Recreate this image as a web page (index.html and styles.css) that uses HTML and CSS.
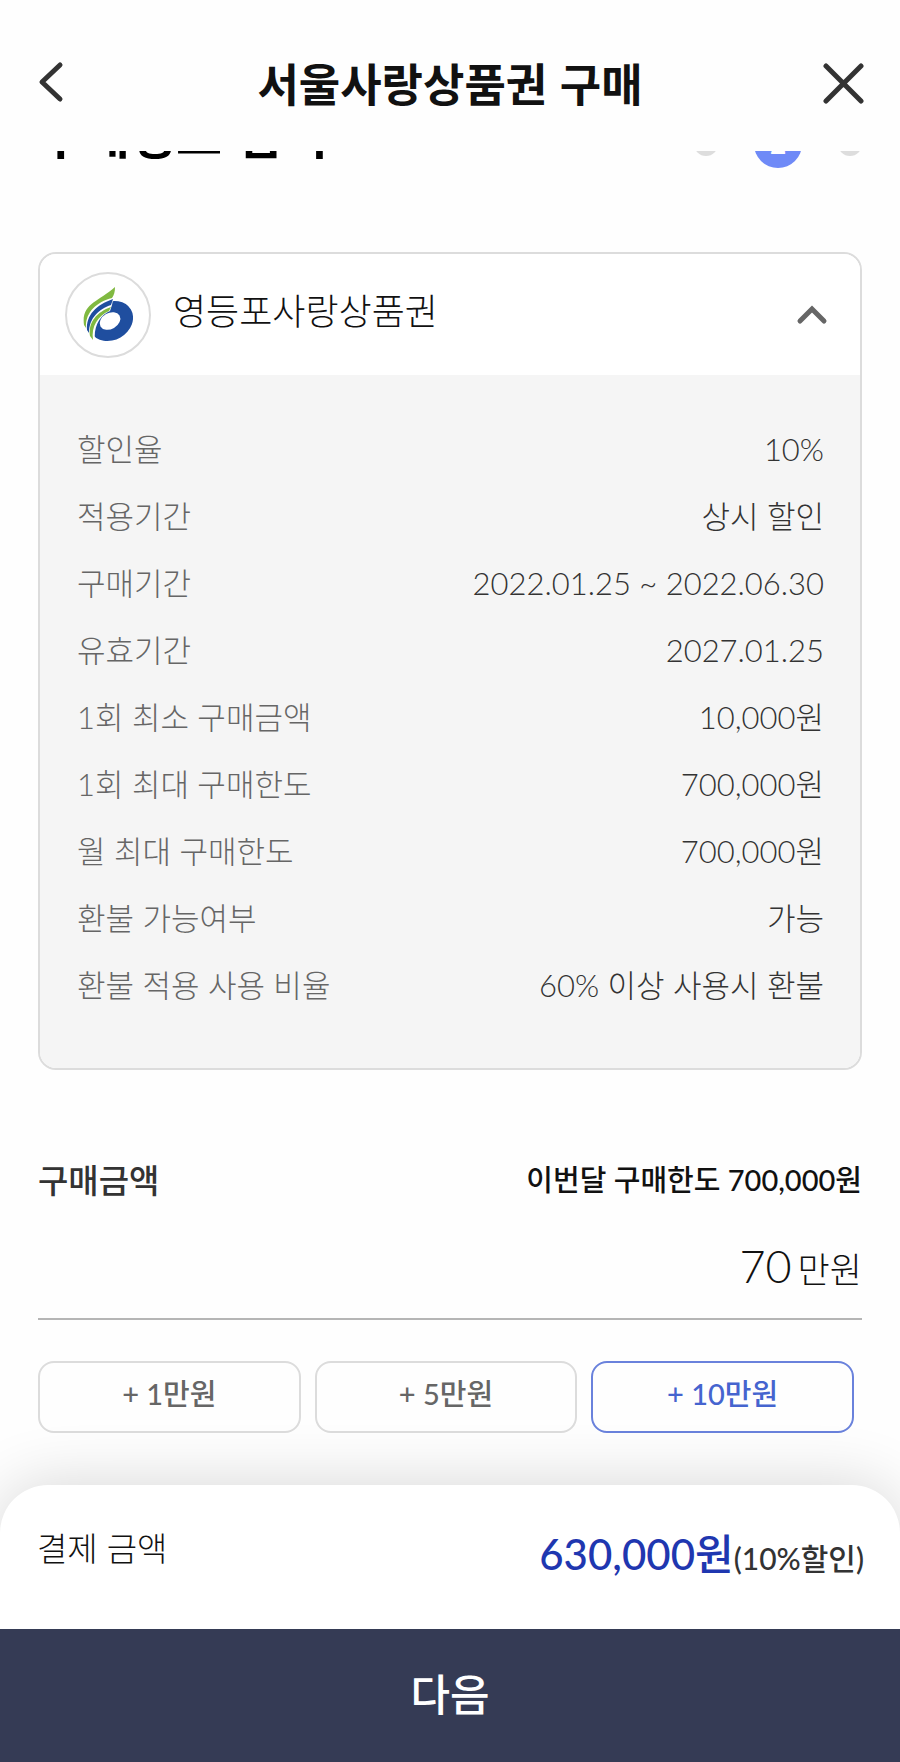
FILE: index.html
```html
<!DOCTYPE html>
<html lang="ko">
<head>
<meta charset="utf-8">
<meta name="viewport" content="width=device-width, initial-scale=1">
<title>서울사랑상품권 구매</title>
<link rel="stylesheet" href="styles.css">
</head>
<body>
<div class="app">
  <header class="topbar">
    <button class="icon-button" type="button" aria-label="뒤로">
      <svg width="44" height="44" viewBox="0 0 44 44"><path d="M24 4 L6 21 L24 38" /></svg>
    </button>
    <h1 class="topbar-title">서울사랑상품권 구매</h1>
    <button class="icon-button" type="button" aria-label="닫기">
      <svg width="44" height="44" viewBox="0 0 44 44"><path d="M6 5 L41 40 M41 5 L6 40" /></svg>
    </button>
  </header>

  <main class="content">
    <section class="step-strip">
      <h2 class="step-title">구매정보 입력</h2>
      <ol class="steps">
        <li class="step"></li>
        <li class="step step-current">2</li>
        <li class="step"></li>
      </ol>
    </section>

    <section class="voucher">
      <button class="voucher-head" type="button" aria-expanded="true">
        <span class="voucher-logo">
          <svg width="50" height="56" viewBox="0 0 50 56">
            <ellipse cx="28" cy="34" rx="23" ry="19" transform="rotate(-30 28 34)" fill="#1f4e9f"/>
            <ellipse cx="27" cy="34" rx="11" ry="8" transform="rotate(-30 27 34)" fill="#fff"/>
            <path fill="#fff" d="M0 28 C4 16 16 11 31 8 L29 18 L27 24 C18 28 10 38 12 55 L4 56 L-1 44 Z"/>
            <path fill="#1f4e9f" d="M30 12 L28 18 C16 22 6 31 6 46 L4 43 C3 28 13 18 30 12 Z"/>
            <path fill="#80b941" d="M32 0 C32 5 31 8 29 11 C13 15 2 26 3 41 L1 38 C-2 17 15 15 32 0 Z"/>
            <path fill="#80b941" d="M28 20 L26 24 C15 29 8 39 10 53 L7 49 C5 35 14 25 28 20 Z"/>
          </svg>
        </span>
        <span class="voucher-name">영등포사랑상품권</span>
        <svg class="chevron" width="32" height="24" viewBox="0 0 32 24"><path d="M4 18 L16 6 L28 18"/></svg>
      </button>
      <dl class="details">
        <div class="detail"><dt>할인율</dt><dd>10%</dd></div>
        <div class="detail"><dt>적용기간</dt><dd>상시 할인</dd></div>
        <div class="detail"><dt>구매기간</dt><dd>2022.01.25 ~ 2022.06.30</dd></div>
        <div class="detail"><dt>유효기간</dt><dd>2027.01.25</dd></div>
        <div class="detail"><dt>1회 최소 구매금액</dt><dd>10,000원</dd></div>
        <div class="detail"><dt>1회 최대 구매한도</dt><dd>700,000원</dd></div>
        <div class="detail"><dt>월 최대 구매한도</dt><dd>700,000원</dd></div>
        <div class="detail"><dt>환불 가능여부</dt><dd>가능</dd></div>
        <div class="detail"><dt>환불 적용 사용 비율</dt><dd>60% 이상 사용시 환불</dd></div>
      </dl>
    </section>

    <section class="purchase">
      <div class="purchase-head">
        <label class="purchase-label" for="amount">구매금액</label>
        <p class="purchase-limit">이번달 구매한도 700,000원</p>
      </div>
      <div class="amount-field">
        <input class="amount-input" id="amount" type="text" inputmode="numeric" value="70">
        <span class="amount-unit">만원</span>
      </div>
      <div class="presets">
        <button class="preset" type="button">+ 1만원</button>
        <button class="preset" type="button">+ 5만원</button>
        <button class="preset preset-active" type="button">+ 10만원</button>
      </div>
    </section>
  </main>

  <footer class="checkout">
    <div class="summary">
      <span class="summary-label">결제 금액</span>
      <p class="summary-value"><strong class="summary-price">630,000원</strong><span class="summary-note">(10%할인)</span></p>
    </div>
    <button class="next" type="button">다음</button>
  </footer>
</div>
</body>
</html>
```
FILE: styles.css
```css
* {
  box-sizing: border-box;
}

body {
  margin: 0;
  background: #fefefe;
  color: #111;
  font-family: Lato, "Noto Sans CJK KR", sans-serif;
}

button,
input {
  font: inherit;
  color: inherit;
}

button {
  padding: 0;
  border: 0;
  background: none;
}

h1,
h2,
p,
dl,
dd,
ol {
  margin: 0;
  padding: 0;
}

svg {
  display: block;
}

.app {
  display: flex;
  flex-direction: column;
  min-height: 100vh;
}

.topbar {
  display: flex;
  align-items: center;
  justify-content: space-between;
  height: 151px;
  padding: 15px 36px 0;
}

.icon-button {
  width: 44px;
  height: 44px;
}

.icon-button path {
  fill: none;
  stroke: #333;
  stroke-width: 5;
  stroke-linecap: round;
  stroke-linejoin: round;
}

.topbar-title {
  font-family: "Noto Sans CJK KR", sans-serif;
  font-size: 45px;
  font-weight: 700;
  line-height: 64px;
}

.content {
  flex: 1;
  padding: 0 38px;
}

.step-strip {
  display: flex;
  align-items: flex-end;
  justify-content: space-between;
  height: 17px;
  overflow: hidden;
}

.step-title {
  color: #000;
  font-family: "Noto Sans CJK KR", sans-serif;
  font-size: 50px;
  font-weight: 700;
  line-height: 72px;
}

.steps {
  display: flex;
  align-items: center;
  gap: 36px;
  list-style: none;
}

.step {
  width: 24px;
  height: 24px;
  border-radius: 50%;
  background: #ddd;
}

.step-current {
  width: 48px;
  height: 48px;
  background: #6f8af7;
  color: #fff;
  font-size: 28px;
  font-weight: 700;
  line-height: 46px;
  text-align: center;
}

.voucher {
  margin-top: 84px;
  overflow: hidden;
  border: 2px solid #dcdcdc;
  border-radius: 18px;
}

.voucher-head {
  display: flex;
  align-items: center;
  gap: 22px;
  width: 100%;
  height: 121px;
  padding: 0 32px 0 25px;
  background: #fff;
  text-align: left;
}

.voucher-logo {
  display: grid;
  place-items: center;
  width: 86px;
  height: 86px;
  border: 2px solid #dcdcdc;
  border-radius: 50%;
}

.voucher-name {
  flex: 1;
  padding-bottom: 8px;
  font-size: 36px;
  font-weight: 300;
  line-height: 52px;
}

.chevron path {
  fill: none;
  stroke: #666;
  stroke-width: 5;
  stroke-linecap: round;
}

.details {
  padding: 41px 36px 49px 37px;
  background: #f5f5f5;
}

.detail {
  display: flex;
  justify-content: space-between;
  font-size: 31px;
  font-weight: 300;
  line-height: 67px;
}

.detail dt {
  color: #666;
}

.detail dd {
  color: #333;
}

.purchase {
  margin-top: 86px;
}

.purchase-head {
  display: flex;
  align-items: center;
  justify-content: space-between;
}

.purchase-label {
  color: #333;
  font-size: 33px;
  font-weight: 500;
  line-height: 48px;
}

.purchase-limit {
  font-size: 29px;
  font-weight: 500;
  line-height: 48px;
}

.amount-field {
  display: flex;
  align-items: baseline;
  gap: 6px;
  margin-top: 32px;
  padding-bottom: 22px;
  border-bottom: 2px solid #b5b5b5;
  font-weight: 300;
}

.amount-input {
  flex: 1;
  min-width: 0;
  height: 60px;
  padding: 0;
  border: 0;
  outline: 0;
  background: none;
  font-size: 45px;
  text-align: right;
}

.amount-unit {
  font-size: 35px;
  line-height: 48px;
}

.presets {
  display: grid;
  grid-template-columns: repeat(3, 1fr);
  gap: 14px;
  margin-top: 41px;
  padding-right: 8px;
}

.preset {
  height: 72px;
  padding-bottom: 10px;
  border: 2px solid #dcdcdc;
  border-radius: 16px;
  color: #666;
  font-size: 29px;
  font-weight: 500;
}

.preset-active {
  border-color: #6a82dc;
  color: #4564cf;
}

.checkout {
  border-radius: 48px 48px 0 0;
  background: #fff;
  box-shadow: 0 0 64px rgba(0, 0, 0, 0.16);
}

.summary {
  display: flex;
  align-items: flex-start;
  justify-content: space-between;
  height: 144px;
  padding: 39px 36px 0 37px;
}

.summary-label {
  font-size: 33px;
  font-weight: 300;
  line-height: 48px;
}

.summary-value {
  display: flex;
  align-items: baseline;
  color: #333;
  line-height: 60px;
}

.summary-price {
  color: #1f37b0;
  font-size: 42px;
  font-weight: 500;
}

.summary-note {
  font-size: 30px;
  font-weight: 500;
}

.next {
  display: block;
  width: 100%;
  height: 133px;
  padding-bottom: 8px;
  background: #353b55;
  color: #fff;
  font-size: 43px;
  font-weight: 500;
}
```
